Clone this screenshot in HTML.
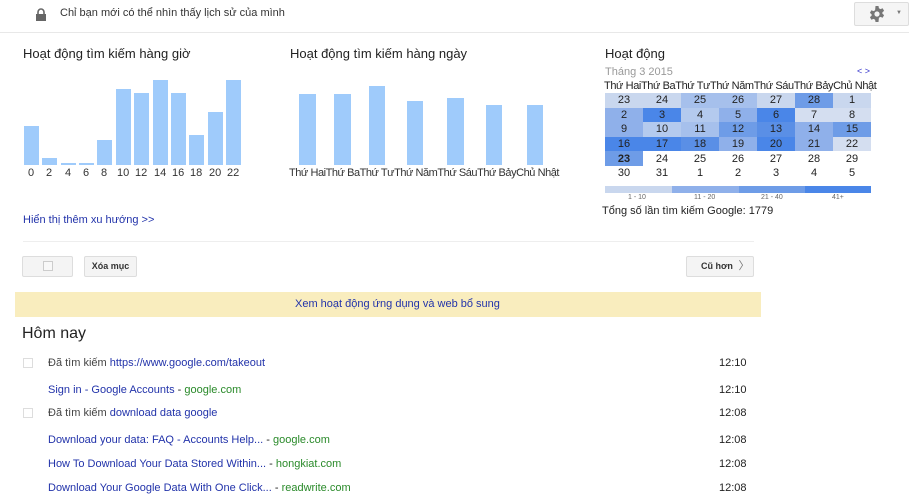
<!DOCTYPE html>
<html><head><meta charset="utf-8"><style>
*{margin:0;padding:0;box-sizing:border-box}
body{width:909px;height:500px;overflow:hidden;background:#fff;font-family:"Liberation Sans",Arial,sans-serif;color:#222;position:relative}
.a{position:absolute;white-space:nowrap}
.bar{position:absolute;background:#9fcbfb}
.l{font-size:11px;color:#333;position:absolute;top:167px;white-space:nowrap}
.blue{color:#2233aa}
.green{color:#2a8a2a}
.t{font-size:11px}
.cal td{width:38px;height:14.6px;text-align:center;font-size:11px;padding:0;color:#222}
.cb{position:absolute;width:10px;height:10px;border:1px solid #ddd;background:#fff}
</style></head><body>
<div class="a" style="left:0;top:0;width:909px;height:33px;border-bottom:1px solid #e8e8e8"></div>
<svg class="a" style="left:35px;top:8px" width="12" height="14" viewBox="0 0 12 14"><path d="M3 6V4a3 3 0 0 1 6 0v2" fill="none" stroke="#666" stroke-width="1.6"/><rect x="1" y="6" width="10" height="7" fill="#666"/></svg>
<div class="a t" style="left:60px;top:7px;color:#333">Chỉ bạn mới có thể nhìn thấy lịch sử của mình</div>
<div class="a" style="left:854px;top:2px;width:55px;height:24px;border:1px solid #ddd;background:#f5f5f5;border-radius:2px"></div>
<svg class="a" style="left:869px;top:6px" width="16" height="16" viewBox="0 0 16 16"><path d="M6.5 0h3l.4 2.2 1.6.9 2.1-.8 1.5 2.6-1.7 1.4v1.4l1.7 1.4-1.5 2.6-2.1-.8-1.6.9L9.5 16h-3l-.4-2.2-1.6-.9-2.1.8L.9 11.1l1.7-1.4V8.3L.9 6.9 2.4 4.3l2.1.8 1.6-.9z" fill="#777"/><circle cx="8" cy="8" r="2.6" fill="#f5f5f5"/></svg>
<div class="a" style="left:896px;top:10px;font-size:6px;color:#777">▼</div>

<div class="a" style="left:23px;top:46px;font-size:13px">Hoạt động tìm kiếm hàng giờ</div>
<div class="bar" style="left:24px;top:126px;width:15px;height:39px"></div>
<div class="bar" style="left:42px;top:158px;width:15px;height:7px"></div>
<div class="bar" style="left:61px;top:163px;width:15px;height:2px"></div>
<div class="bar" style="left:79px;top:163px;width:15px;height:2px"></div>
<div class="bar" style="left:97px;top:140px;width:15px;height:25px"></div>
<div class="bar" style="left:116px;top:89px;width:15px;height:76px"></div>
<div class="bar" style="left:134px;top:93px;width:15px;height:72px"></div>
<div class="bar" style="left:153px;top:80px;width:15px;height:85px"></div>
<div class="bar" style="left:171px;top:93px;width:15px;height:72px"></div>
<div class="bar" style="left:189px;top:135px;width:15px;height:30px"></div>
<div class="bar" style="left:208px;top:112px;width:15px;height:53px"></div>
<div class="bar" style="left:226px;top:80px;width:15px;height:85px"></div>
<div class="l" style="left:28px">0</div><div class="l" style="left:46px">2</div><div class="l" style="left:65px">4</div><div class="l" style="left:83px">6</div><div class="l" style="left:101px">8</div><div class="l" style="left:117px">10</div><div class="l" style="left:135px">12</div><div class="l" style="left:154px">14</div><div class="l" style="left:172px">16</div><div class="l" style="left:190px">18</div><div class="l" style="left:209px">20</div><div class="l" style="left:227px">22</div>

<div class="a" style="left:290px;top:46px;font-size:13px">Hoạt động tìm kiếm hàng ngày</div>
<div class="bar" style="left:299px;top:94px;width:17px;height:71px"></div>
<div class="bar" style="left:334px;top:94px;width:17px;height:71px"></div>
<div class="bar" style="left:369px;top:86px;width:16px;height:79px"></div>
<div class="bar" style="left:407px;top:101px;width:16px;height:64px"></div>
<div class="bar" style="left:447px;top:98px;width:17px;height:67px"></div>
<div class="bar" style="left:486px;top:105px;width:16px;height:60px"></div>
<div class="bar" style="left:527px;top:105px;width:16px;height:60px"></div>
<div class="l" style="left:289px;letter-spacing:-0.45px">Thứ HaiThứ BaThứ TưThứ NămThứ SáuThứ BảyChủ Nhật</div>

<div class="a" style="left:605px;top:46px;font-size:13px">Hoạt động</div>
<div class="a t" style="left:605px;top:66px;color:#999">Tháng 3 2015</div>
<div class="a t" style="left:857px;top:66px;color:#33c;font-size:9px">&lt; &gt;</div>
<div class="a" style="left:604px;top:80px;font-size:11px;letter-spacing:-0.4px">Thứ HaiThứ BaThứ TưThứ NămThứ SáuThứ BảyChủ Nhật</div>
<table class="cal a" style="left:605px;top:93px;border-collapse:collapse;width:266px">
<tr><td style="background:#c9d7ee">23</td><td style="background:#c9d7ee">24</td><td style="background:#a6c0ec">25</td><td style="background:#a6c0ec">26</td><td style="background:#c9d7ee">27</td><td style="background:#6e9ce7">28</td><td style="background:#c9d7ee">1</td></tr>
<tr><td style="background:#8fb0ea">2</td><td style="background:#4a86e8">3</td><td style="background:#b4caee">4</td><td style="background:#8fb0ea">5</td><td style="background:#4a86e8">6</td><td style="background:#d4def0">7</td><td style="background:#d4def0">8</td></tr>
<tr><td style="background:#8fb0ea">9</td><td style="background:#b4caee">10</td><td style="background:#a6c0ec">11</td><td style="background:#6e9ce7">12</td><td style="background:#5a8fe6">13</td><td style="background:#8fb0ea">14</td><td style="background:#6e9ce7">15</td></tr>
<tr><td style="background:#4a86e8">16</td><td style="background:#4a86e8">17</td><td style="background:#5a8fe6">18</td><td style="background:#8fb0ea">19</td><td style="background:#4a86e8">20</td><td style="background:#8fb0ea">21</td><td style="background:#d4def0">22</td></tr>
<tr><td style="background:#6e9ce7;font-weight:bold">23</td><td>24</td><td>25</td><td>26</td><td>27</td><td>28</td><td>29</td></tr>
<tr><td>30</td><td>31</td><td>1</td><td>2</td><td>3</td><td>4</td><td>5</td></tr>
</table>
<div class="a" style="left:605px;top:186px;width:67px;height:7px;background:#c9d7ee"></div>
<div class="a" style="left:672px;top:186px;width:67px;height:7px;background:#8fb0ea"></div>
<div class="a" style="left:739px;top:186px;width:66px;height:7px;background:#6e9ce7"></div>
<div class="a" style="left:805px;top:186px;width:66px;height:7px;background:#4a86e8"></div>
<div class="a" style="left:628px;top:194px;font-size:7px;color:#666">1 - 10</div>
<div class="a" style="left:694px;top:194px;font-size:7px;color:#666">11 - 20</div>
<div class="a" style="left:761px;top:194px;font-size:7px;color:#666">21 - 40</div>
<div class="a" style="left:832px;top:194px;font-size:7px;color:#666">41+</div>
<div class="a t" style="left:602px;top:205px">Tổng số lần tìm kiếm Google: 1779</div>

<div class="a t blue" style="left:23px;top:214px">Hiển thị thêm xu hướng &gt;&gt;</div>
<div class="a" style="left:23px;top:241px;width:731px;height:1px;background:#eee"></div>
<div class="a" style="left:22px;top:256px;width:51px;height:21px;border:1px solid #ddd;background:#f4f4f4;border-radius:2px"></div>
<div class="a" style="left:43px;top:261px;width:10px;height:10px;border:1px solid #ccc;background:#f8f8f8"></div>
<div class="a" style="left:84px;top:256px;width:53px;height:21px;border:1px solid #ddd;background:#f4f4f4;border-radius:2px;font-size:9px;font-weight:bold;text-align:center;line-height:19px;color:#333">Xóa mục</div>
<div class="a" style="left:686px;top:256px;width:68px;height:21px;border:1px solid #ddd;background:#f4f4f4;border-radius:2px;font-size:9px;font-weight:bold;line-height:19px;color:#333;padding-left:14px">Cũ hơn <span style="font-weight:normal;color:#777;font-size:11px">&nbsp;〉</span></div>
<div class="a" style="left:15px;top:292px;width:746px;height:25px;background:#f9edbe"></div>
<div class="a t blue" style="left:295px;top:298px">Xem hoạt động ứng dụng và web bổ sung</div>

<div class="a" style="left:22px;top:325px;font-size:16px;color:#222">Hôm nay</div>
<div class="cb" style="left:23px;top:358px"></div>
<div class="a t" style="left:48px;top:357px;color:#444">Đã tìm kiếm <span class="blue">https://www.google.com/takeout</span></div>
<div class="a t" style="left:48px;top:384px"><span class="blue">Sign in - Google Accounts</span> - <span class="green">google.com</span></div>
<div class="cb" style="left:23px;top:408px"></div>
<div class="a t" style="left:48px;top:407px;color:#444">Đã tìm kiếm <span class="blue">download data google</span></div>
<div class="a t" style="left:48px;top:434px"><span class="blue">Download your data: FAQ - Accounts Help...</span> - <span class="green">google.com</span></div>
<div class="a t" style="left:48px;top:458px"><span class="blue">How To Download Your Data Stored Within...</span> - <span class="green">hongkiat.com</span></div>
<div class="a t" style="left:48px;top:482px"><span class="blue">Download Your Google Data With One Click...</span> - <span class="green">readwrite.com</span></div>
<div class="a t" style="left:719px;top:357px">12:10</div>
<div class="a t" style="left:719px;top:384px">12:10</div>
<div class="a t" style="left:719px;top:407px">12:08</div>
<div class="a t" style="left:719px;top:434px">12:08</div>
<div class="a t" style="left:719px;top:458px">12:08</div>
<div class="a t" style="left:719px;top:482px">12:08</div>
</body></html>
